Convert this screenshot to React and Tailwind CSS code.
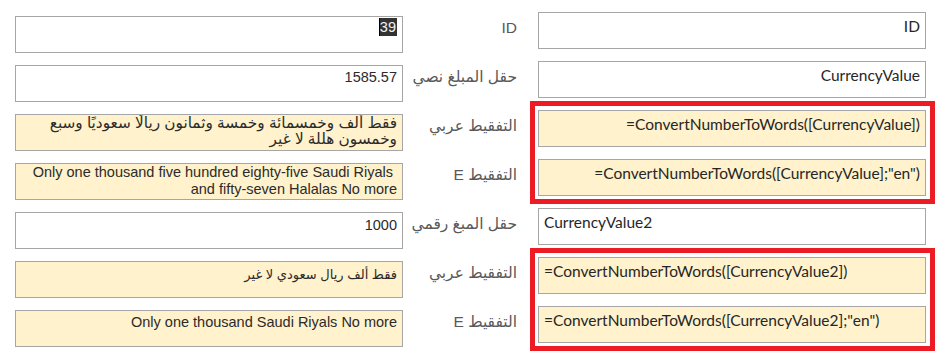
import React from "react";

const leftFont = { fontFamily: '"Liberation Sans", "DejaVu Sans", sans-serif' };
const rightFont = { fontFamily: 'Lato, "Open Sans", sans-serif' };

function LeftRow({ label, yellow, children, pt = "pt-[2px]" }) {
    return (
        <div className="flex items-start">
            <div
                className={`w-[388px] h-[37px] border border-[#a6a6a6] overflow-hidden px-[5px] ${pt} text-right text-[14.5px] leading-[17px] text-[#2b2b2b] ${
                    yellow ? "bg-[#fff2cc]" : "bg-white"
                }`}
            >
                {children}
            </div>
            <div dir="rtl" className="w-[115px] pr-[1px] pt-[3px] text-[15.5px] leading-[17px] text-[#595959] whitespace-nowrap">
                {label}
            </div>
        </div>
    );
}

function RightBox({ yellow, left, children }) {
    return (
        <div
            className={`w-[388px] h-[37px] border border-[#a6a6a6] px-[5px] pt-[3px] text-[15.5px] leading-[20px] text-[#262626] whitespace-nowrap ${
                left ? "text-left" : "text-right"
            } ${yellow ? "bg-[#fff2cc]" : "bg-white"}`}
        >
            {children}
        </div>
    );
}

function RedFrame({ children }) {
    return (
        <div className="-mt-[9px] -mb-[8px] -ml-[8px] -mr-[9px] border-[5px] border-[#ed1c24] pt-[4px] pb-[3px] pl-[3px] pr-[4px] flex flex-col gap-[12px]">
            {children}
        </div>
    );
}

export default function App() {
    return (
        <div className="w-[946px] h-[364px] bg-white flex pl-[15px]">
            <div className="flex flex-col gap-[12px] pt-[16px]" style={leftFont}>
                <LeftRow label="ID" pt="pt-[1px]">
                    <div className="flex justify-end">
                        <span className="relative bg-[#333333] text-[#f2f2f2] px-[1px] leading-[18px]">
                            <span className="absolute left-0 top-0 bottom-0 w-[1px] bg-black"></span>
                            39
                        </span>
                    </div>
                </LeftRow>
                <LeftRow label="حقل المبلغ نصي" pt="pt-[3px]">1585.57</LeftRow>
                <LeftRow label="التفقيط عربي" yellow pt="pt-0">
                    <div dir="rtl" className="text-[15.3px] leading-[16px] whitespace-nowrap">
                        <div>فقط ألف وخمسمائة وخمسة وثمانون ريالًا سعوديًا وسبع</div>
                        <div>وخمسون هللة لا غير</div>
                    </div>
                </LeftRow>
                <LeftRow label="التفقيط E" yellow pt="pt-0">
                    <div className="whitespace-nowrap">
                        <div className="pr-[4px]">Only one thousand five hundred eighty-five Saudi Riyals</div>
                        <div>and fifty-seven Halalas No more</div>
                    </div>
                </LeftRow>
                <LeftRow label="حقل المبغ رقمي" pt="pt-[4px]">1000</LeftRow>
                <LeftRow label="التفقيط عربي" yellow pt="pt-[4px]">
                    <div dir="rtl" className="text-[13px]">فقط ألف ريال سعودي لا غير</div>
                </LeftRow>
                <LeftRow label="التفقيط E" yellow pt="pt-[3px]">Only one thousand Saudi Riyals No more</LeftRow>
            </div>

            <div className="ml-[20px] pt-[12px] w-[388px] flex flex-col gap-[12px]" style={rightFont}>
                <RightBox>ID</RightBox>
                <RightBox>CurrencyValue</RightBox>
                <RedFrame>
                    <RightBox yellow>=ConvertNumberToWords([CurrencyValue])</RightBox>
                    <RightBox yellow>=ConvertNumberToWords([CurrencyValue];"en")</RightBox>
                </RedFrame>
                <RightBox left>CurrencyValue2</RightBox>
                <RedFrame>
                    <RightBox yellow left>=ConvertNumberToWords([CurrencyValue2])</RightBox>
                    <RightBox yellow left>=ConvertNumberToWords([CurrencyValue2];"en")</RightBox>
                </RedFrame>
            </div>
        </div>
    );
}
